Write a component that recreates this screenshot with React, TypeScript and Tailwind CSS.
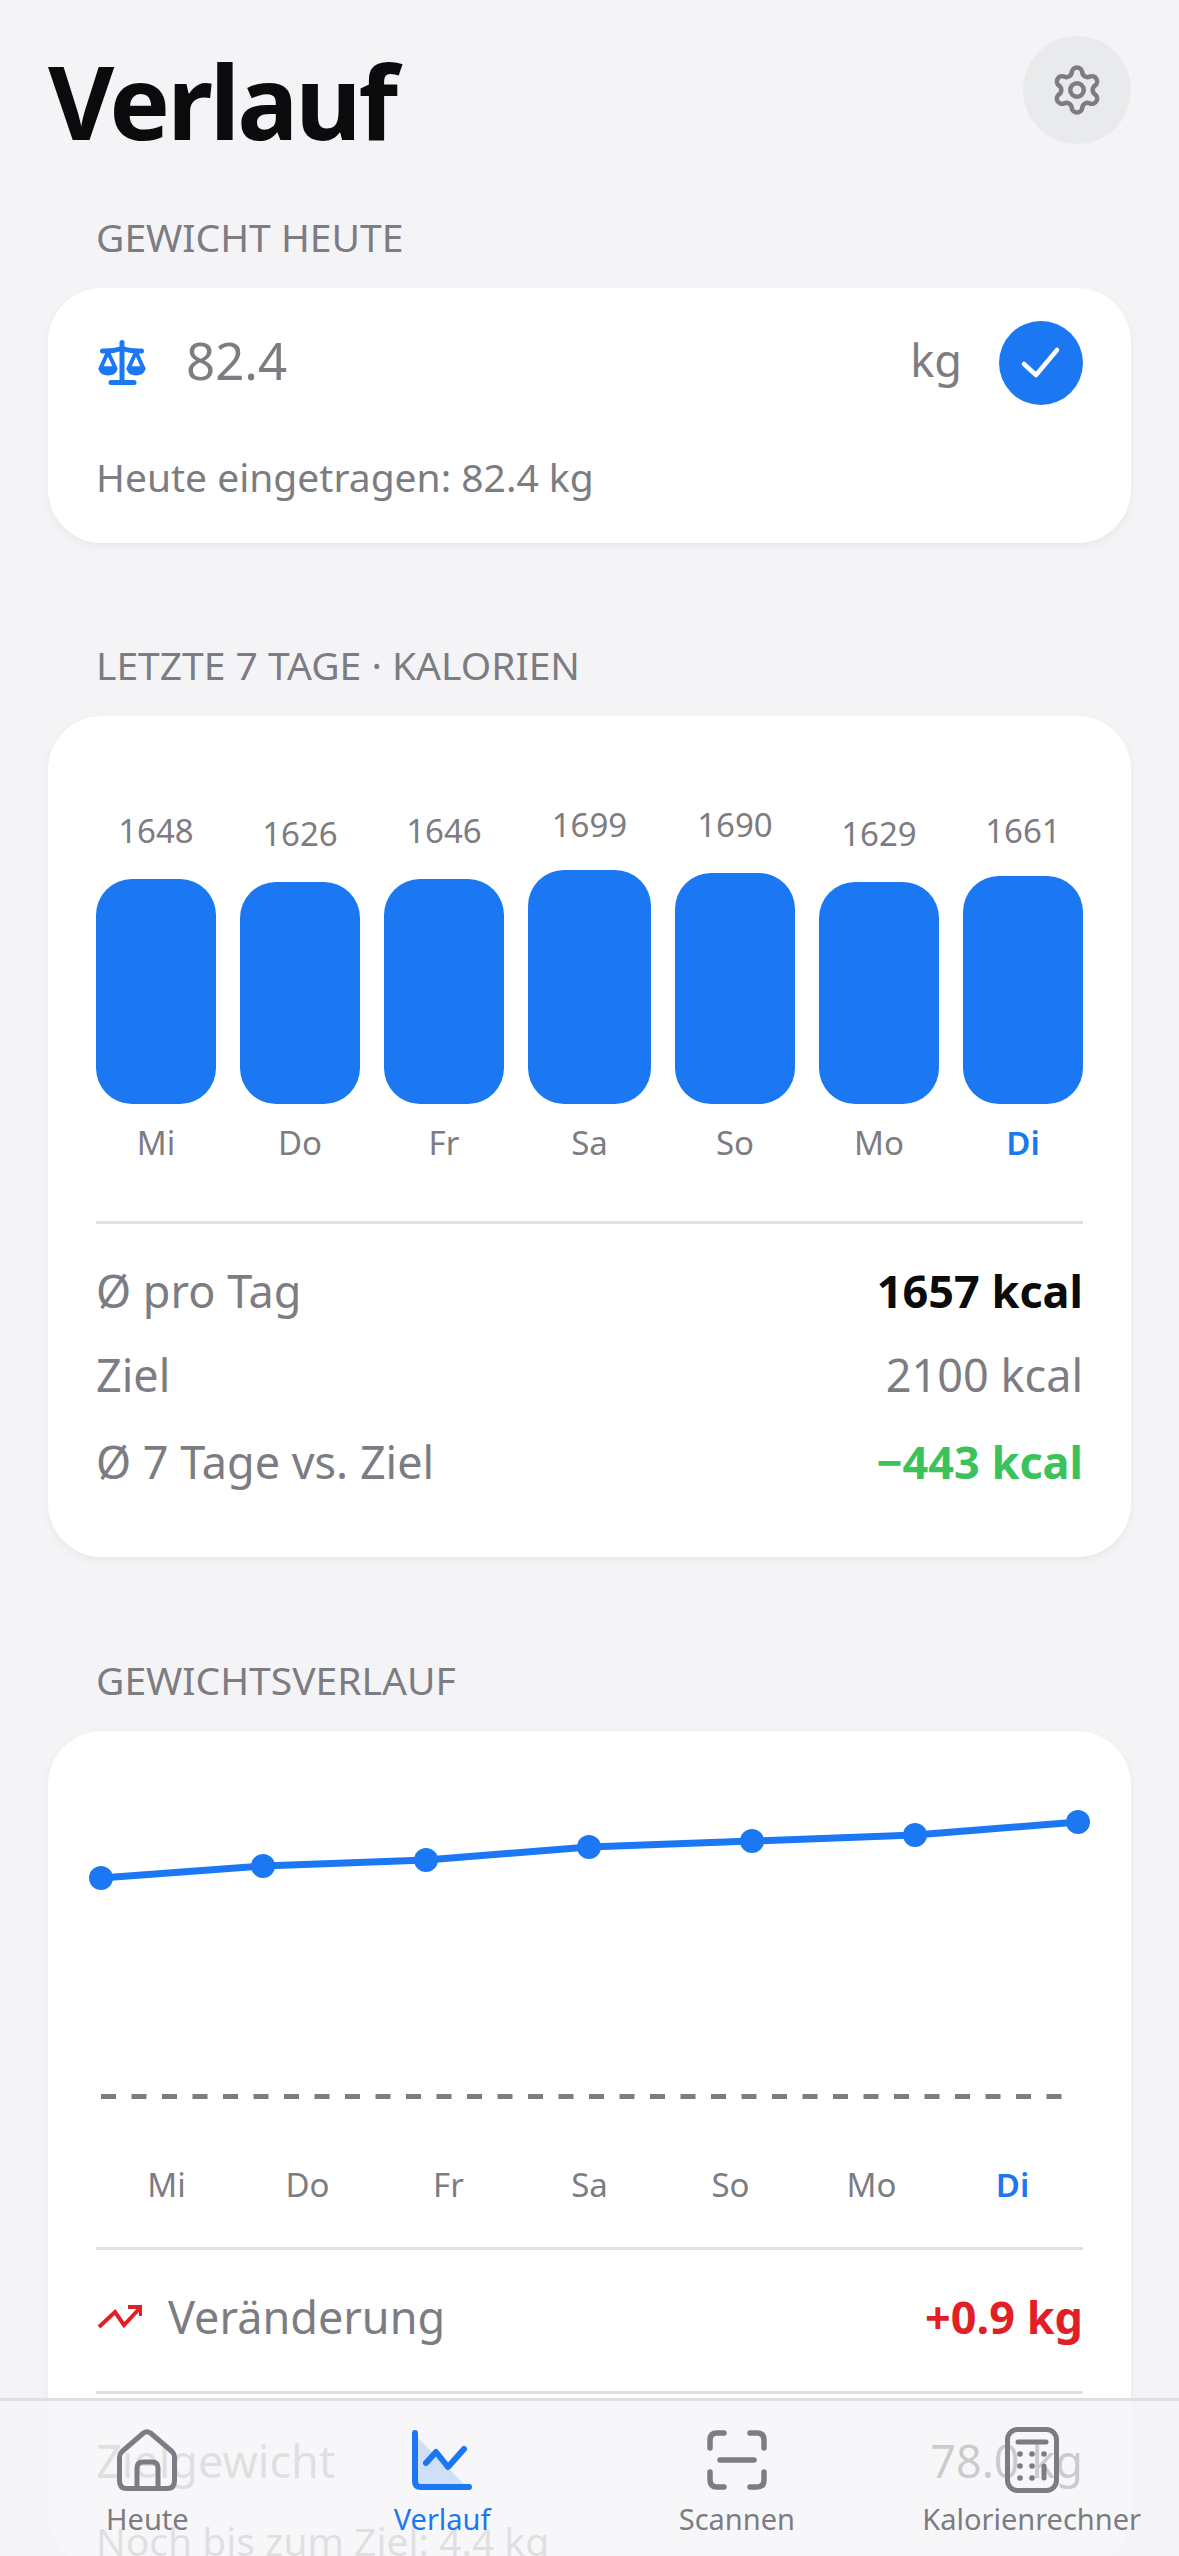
import React from "react";
import { Settings } from "lucide-react";

const calorieBars = [
  { day: "Mi", value: 1648, height: 225, gap: 26 },
  { day: "Do", value: 1626, height: 222, gap: 26 },
  { day: "Fr", value: 1646, height: 225, gap: 26 },
  { day: "Sa", value: 1699, height: 234, gap: 23, wide: true },
  { day: "So", value: 1690, height: 231, gap: 26 },
  { day: "Mo", value: 1629, height: 222, gap: 26 },
  { day: "Di", value: 1661, height: 228, gap: 23, active: true },
];

const weekDays = ["Mi", "Do", "Fr", "Sa", "So", "Mo", "Di"];

const weightPoints: [number, number][] = [
  [5, 77],
  [167, 65],
  [330, 59],
  [493, 46],
  [656, 40],
  [819, 34],
  [982, 21],
];

const SectionLabel = ({ text, className }: { text: string; className: string }) => (
  <div className={`px-24 text-[39px] leading-[54px] text-[#7c7c82] ${className}`}>{text}</div>
);

const Card = ({ className, children }: { className: string; children: React.ReactNode }) => (
  <div className={`mx-12 rounded-[54px] bg-white px-12 shadow-[0_3px_8px_rgba(0,0,0,0.05)] ${className}`}>
    {children}
  </div>
);

const StatRow = ({ label, value, valueClass }: { label: string; value: string; valueClass: string }) => (
  <div className="flex items-center justify-between text-[45px] leading-[60px]">
    <span className="text-[#7c7c82]">{label}</span>
    <span className={valueClass}>{value}</span>
  </div>
);

const ScaleIcon = () => (
  <svg width="50" height="46" viewBox="0 0 50 46" fill="none" stroke="#1c77f2" strokeWidth="4" strokeLinecap="round" strokeLinejoin="round">
    <path d="M25 2.5V42" strokeWidth="5" />
    <path d="M14 42.5H37" strokeWidth="5" />
    <path d="M5.5 11C13 11.5 19 10.5 25 8.5C31 10.5 37 11.5 44.5 11" strokeWidth="5" />
    <path d="M11 12L3.5 28.5H18.5ZM39 12L31.5 28.5H46.5Z" />
    <path d="M3.5 28.5C5 35 17 35 18.5 28.5ZM31.5 28.5C33 35 45 35 46.5 28.5Z" fill="#1c77f2" />
  </svg>
);

const CheckIcon = () => (
  <svg width="84" height="84" viewBox="0 0 84 84" fill="none" stroke="#ffffff" strokeWidth="4.5" strokeLinecap="round" strokeLinejoin="round">
    <path d="M25 43L37 54L58 29" />
  </svg>
);

const TrendIcon = () => (
  <svg width="46" height="24" viewBox="0 0 46 24" fill="none" stroke="#e01f26" strokeWidth="4">
    <path d="M3 22L19 7L28 20L44 3" />
    <path d="M32 2H45V11" />
  </svg>
);

const HomeIcon = () => (
  <svg width="60" height="63" viewBox="0 0 60 63" fill="none" stroke="#7c7c82" strokeWidth="5" strokeLinecap="round" strokeLinejoin="round">
    <path d="M26.5 4Q30 1.5 33.5 4L55 22.5Q57.5 25 57.5 28V52Q57.5 59.5 50 59.5H10Q2.5 59.5 2.5 52V28Q2.5 25 5 22.5Z" />
    <path d="M20 59V39Q20 33 26 33H35Q41 33 41 39V59" />
  </svg>
);

const ChartIcon = () => (
  <svg width="60" height="60" viewBox="0 0 60 60" fill="none" strokeLinecap="round" strokeLinejoin="round">
    <path d="M3 5L55 57H3Z" fill="#1c77f2" fillOpacity="0.18" />
    <path d="M3 3V51Q3 57 9 57H57" stroke="#1c77f2" strokeWidth="6" />
    <path d="M14 33L24 22L36 37L52 19" stroke="#1c77f2" strokeWidth="6" />
  </svg>
);

const ScanIcon = () => (
  <svg width="60" height="60" viewBox="0 0 60 60" fill="none" stroke="#7c7c82" strokeWidth="5.5" strokeLinecap="round" strokeLinejoin="round">
    <path d="M3 18V10Q3 3 10 3H17M43 3H50Q57 3 57 10V18M3 42V50Q3 57 10 57H17M43 57H50Q57 57 57 50V42M13 30H47" />
  </svg>
);

const CalculatorIcon = () => (
  <svg width="54" height="66" viewBox="0 0 54 66" fill="none" stroke="#7c7c82" strokeLinecap="round">
    <rect x="2.5" y="2.5" width="49" height="61" rx="10" strokeWidth="5" />
    <path d="M13 15H41" strokeWidth="5" />
    <path d="M39 39V51" strokeWidth="5" />
    <g fill="#7c7c82" stroke="none">
      <circle cx="15" cy="27" r="2.8" />
      <circle cx="27" cy="27" r="2.8" />
      <circle cx="39" cy="27" r="2.8" />
      <circle cx="15" cy="39" r="2.8" />
      <circle cx="27" cy="39" r="2.8" />
      <circle cx="15" cy="51" r="2.8" />
      <circle cx="27" cy="51" r="2.8" />
    </g>
  </svg>
);

const tabs = [
  { label: "Heute", icon: <HomeIcon /> },
  { label: "Verlauf", icon: <ChartIcon />, active: true },
  { label: "Scannen", icon: <ScanIcon /> },
  { label: "Kalorienrechner", icon: <CalculatorIcon /> },
];

const App = () => {
  return (
    <div className="relative h-[2556px] w-[1179px] overflow-hidden bg-[#f4f4f6] font-['Noto_Sans',sans-serif]">
      <header className="flex items-start justify-between pl-12 pr-12 pt-9">
        <h1 className="mt-[11px] text-[102px] leading-[108px] font-bold tracking-[-3px] text-[#0b0b0d]">Verlauf</h1>
        <button className="flex h-[108px] w-[108px] items-center justify-center rounded-full bg-[#e9eaec]">
          <Settings size={54} strokeWidth={2} color="#7c7c82" />
        </button>
      </header>

      <SectionLabel text="GEWICHT HEUTE" className="mt-[55px] mb-6" />
      <Card className="pt-[33px] pb-[39px]">
        <div className="flex h-[84px] items-center">
          <span className="ml-px">
            <ScaleIcon />
          </span>
          <span className="mb-1.5 ml-[39px] text-[51px] text-[#7c7c82]">82.4</span>
          <span className="mb-1.5 ml-auto text-[45px] text-[#7c7c82]">kg</span>
          <span className="ml-[37px] flex h-[84px] w-[84px] items-center justify-center rounded-full bg-[#1c77f2]">
            <CheckIcon />
          </span>
        </div>
        <p className="mt-[45px] text-[39px] leading-[54px] text-[#7c7c82]">Heute eingetragen: 82.4 kg</p>
      </Card>

      <SectionLabel text="LETZTE 7 TAGE · KALORIEN" className="mt-[95px] mb-6" />
      <Card className="pt-[86px] pb-[65px]">
        <div className="flex items-end gap-6">
          {calorieBars.map((bar) => (
            <div key={bar.day} className={`flex flex-col items-stretch ${bar.wide ? "w-[123px]" : "flex-1"}`}>
              <span className="text-center text-[33px] leading-[45px] text-[#7c7c82]" style={{ marginBottom: bar.gap }}>
                {bar.value}
              </span>
              <div className="rounded-[36px] bg-[#1c77f2]" style={{ height: bar.height }} />
              <span className={`mt-4 text-center text-[33px] leading-[45px] ${bar.active ? "font-semibold text-[#1c77f2]" : "text-[#7c7c82]"}`}>
                {bar.day}
              </span>
            </div>
          ))}
        </div>
        <div className="mt-[56px] h-[3px] bg-[#e0e0e2]" />
        <div className="mt-[37px] flex flex-col">
          <StatRow label="Ø pro Tag" value="1657 kcal" valueClass="font-bold text-[#0b0b0d]" />
          <div className="mt-6">
            <StatRow label="Ziel" value="2100 kcal" valueClass="text-[#7c7c82]" />
          </div>
          <div className="mt-[27px]">
            <StatRow label="Ø 7 Tage vs. Ziel" value="−443 kcal" valueClass="font-bold text-[#3cc25a]" />
          </div>
        </div>
      </Card>

      <SectionLabel text="GEWICHTSVERLAUF" className="mt-[96px] mb-6" />
      <Card className="pt-[70px]">
        <svg width="987" height="320" viewBox="0 0 987 320" fill="none" className="block overflow-visible">
          <polyline points={weightPoints.map((p) => p.join(",")).join(" ")} stroke="#1c77f2" strokeWidth="7" />
          {weightPoints.map(([x, y]) => (
            <circle key={x} cx={x} cy={y} r="12" fill="#1c77f2" />
          ))}
          <line x1="5" y1="295.5" x2="966" y2="295.5" stroke="#7c7c82" strokeWidth="5" strokeDasharray="15 15.5" />
        </svg>
        <div className="mt-[41px] grid grid-cols-7 text-center text-[33px] leading-[45px]">
          {weekDays.map((day) => (
            <span key={day} className={day === "Di" ? "font-semibold text-[#1c77f2]" : "text-[#7c7c82]"}>
              {day}
            </span>
          ))}
        </div>
        <div className="mt-10 h-[3px] bg-[#e0e0e2]" />
        <div className="mt-[37px] flex items-center justify-between text-[45px] leading-[60px]">
          <span className="flex items-center gap-[26px] text-[#7c7c82]">
            <TrendIcon />
            Veränderung
          </span>
          <span className="font-bold text-[#e01f26]">+0.9 kg</span>
        </div>
        <div className="mt-11 h-[3px] bg-[#e0e0e2]" />
        <div className="mt-[37px] flex items-center justify-between text-[45px] leading-[60px]">
          <span className="text-[#7c7c82]">Zielgewicht</span>
          <span className="text-[#0b0b0d]">78.0 kg</span>
        </div>
        <p className="mt-[23px] text-[39px] leading-[54px] text-[#7c7c82]">Noch bis zum Ziel: 4.4 kg</p>
      </Card>

      <nav className="absolute inset-x-0 bottom-0 grid h-[158px] grid-cols-4 border-t-[3px] border-[#dfdfe2] bg-[#f5f5f8]/[0.82] pt-[26px]">
        {tabs.map((tab) => (
          <div key={tab.label} className="flex flex-col items-center">
            <div className="flex h-[66px] items-center justify-center">{tab.icon}</div>
            <span className={`mt-[6px] text-[29px] leading-[40px] ${tab.active ? "text-[#1c77f2]" : "text-[#7c7c82]"}`}>
              {tab.label}
            </span>
          </div>
        ))}
      </nav>
    </div>
  );
};

export default App;
